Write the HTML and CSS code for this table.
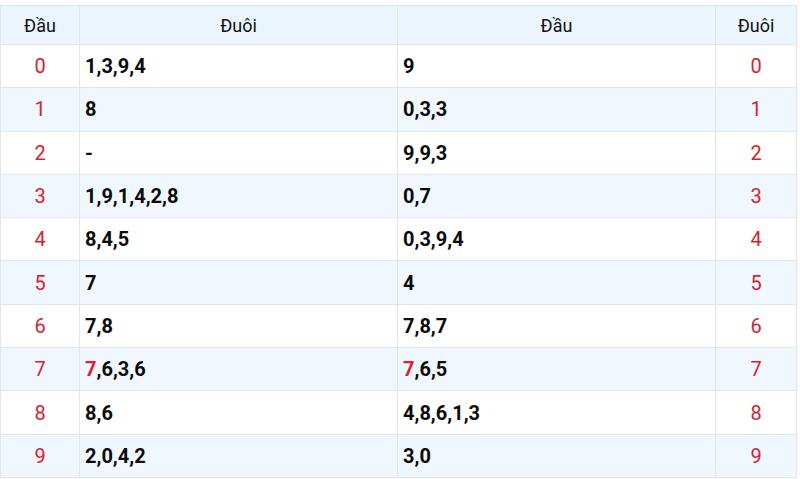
FILE: index.html
```
<!DOCTYPE html>
<html>
<head>
<meta charset="utf-8">
<link rel="stylesheet" href="styles.css">
</head>
<body>
<table class="lt">
<colgroup><col class="c1"><col class="c2"><col class="c3"><col class="c4"></colgroup>
<thead>
<tr><th>Đầu</th><th>Đuôi</th><th>Đầu</th><th>Đuôi</th></tr>
</thead>
<tbody>
<tr><td class="k">0</td><td class="v">1,3,9,4</td><td class="v">9</td><td class="k">0</td></tr>
<tr class="alt"><td class="k">1</td><td class="v">8</td><td class="v">0,3,3</td><td class="k">1</td></tr>
<tr><td class="k">2</td><td class="v">-</td><td class="v">9,9,3</td><td class="k">2</td></tr>
<tr class="alt"><td class="k">3</td><td class="v">1,9,1,4,2,8</td><td class="v">0,7</td><td class="k">3</td></tr>
<tr><td class="k">4</td><td class="v">8,4,5</td><td class="v">0,3,9,4</td><td class="k">4</td></tr>
<tr class="alt"><td class="k">5</td><td class="v">7</td><td class="v">4</td><td class="k">5</td></tr>
<tr><td class="k">6</td><td class="v">7,8</td><td class="v">7,8,7</td><td class="k">6</td></tr>
<tr class="alt"><td class="k">7</td><td class="v"><span class="red">7</span>,6,3,6</td><td class="v"><span class="red">7</span>,6,5</td><td class="k">7</td></tr>
<tr><td class="k">8</td><td class="v">8,6</td><td class="v">4,8,6,1,3</td><td class="k">8</td></tr>
<tr class="alt"><td class="k">9</td><td class="v">2,0,4,2</td><td class="v">3,0</td><td class="k">9</td></tr>
</tbody>
</table>
</body>
</html>
```
FILE: styles.css
```
html, body { margin: 0; padding: 0; background: #fff; }
body { padding-top: 5px; font-family: Roboto, "Noto Sans", sans-serif; }
.lt { border-collapse: collapse; width: 796px; table-layout: fixed; }
.c1 { width: 79px; }
.c2 { width: 318px; }
.c3 { width: 318px; }
.c4 { width: 81px; }
.lt th, .lt td { border: 1px solid #dfe6ee; padding: 0 5px; }
.lt th { height: 38px; background: #ebf5fe; font-weight: 400; font-size: 18px; color: #111; text-align: center; }
.lt td { height: 42.3px; }
.lt tr.alt td { background: #f0f7fe; }
.k { text-align: center; color: #d8212c; font-size: 20px; }
.v { text-align: left; font-weight: 700; font-size: 20px; color: #0b0b0b; }
.red { color: #e0202c; }
```
